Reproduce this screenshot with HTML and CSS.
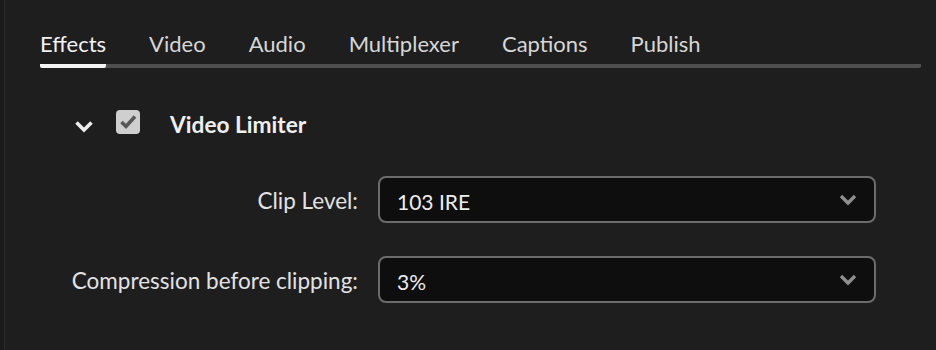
FILE: index.html
```html
<!DOCTYPE html>
<html lang="en">
<head>
    <meta charset="UTF-8">
    <title>Effects - Video Limiter</title>
    <link rel="stylesheet" href="styles.css">
</head>
<body>

<div class="panel">
    <div class="tabs">
        <div class="tab active">Effects</div>
        <div class="tab">Video</div>
        <div class="tab">Audio</div>
        <div class="tab">Multiplexer</div>
        <div class="tab">Captions</div>
        <div class="tab">Publish</div>
    </div>

    <div class="section-head">
        <svg class="twisty" width="20" height="13" viewBox="0 0 20 13">
            <polyline points="2.5,2.5 10,10 17.5,2.5" fill="none" stroke="#ececec" stroke-width="3.6" stroke-linejoin="miter"/>
        </svg>
        <div class="check">
            <svg width="24" height="24" viewBox="0 0 24 24">
                <polyline points="5.5,12 10,16.5 19,6.5" fill="none" stroke="#585858" stroke-width="3.6"/>
            </svg>
        </div>
        <div class="section-title">Video Limiter</div>
    </div>

    <div class="fields">
        <label class="field-label">Clip Level:</label>
        <div class="dropdown">
            <span>103 IRE</span>
            <svg width="20" height="13" viewBox="0 0 20 13">
                <polyline points="3,3 10,10 17,3" fill="none" stroke="#8e8e8e" stroke-width="3.4"/>
            </svg>
        </div>

        <label class="field-label">Compression before clipping:</label>
        <div class="dropdown">
            <span>3%</span>
            <svg width="20" height="13" viewBox="0 0 20 13">
                <polyline points="3,3 10,10 17,3" fill="none" stroke="#8e8e8e" stroke-width="3.4"/>
            </svg>
        </div>
    </div>
</div>

</body>
</html>
```

FILE: styles.css
```css
html, body {
    margin: 0;
    height: 100%;
}
body {
    background: #1a1a1a;
    font-family: Lato, "Open Sans", sans-serif;
    color: #e4e4e4;
    padding-left: 4px;
    box-sizing: border-box;
}
.panel {
    background: #1e1e1e;
    border-left: 1px solid #2b2b2b;
    height: 100%;
    padding: 32px 15px 0 35px;
    box-sizing: border-box;
}
.tabs {
    display: flex;
    gap: 43px;
    border-bottom: 4px solid #4f4f4f;
    border-radius: 2px;
}
.tab {
    font-size: 22px;
    line-height: 24px;
    padding-bottom: 8px;
    color: #d6d6d6;
}
.tab.active {
    color: #f2f2f2;
    border-bottom: 4px solid #f4f4f4;
    border-radius: 2px;
    margin-bottom: -4px;
}
.section-head {
    display: flex;
    align-items: center;
    height: 24px;
    margin-top: 42px;
    padding-left: 34px;
}
.twisty {
    margin-top: 8px;
}
.check {
    width: 24px;
    height: 24px;
    background: #cfcfcf;
    border-radius: 4px;
    margin-left: 22px;
}
.check svg {
    display: block;
}
.section-title {
    font-size: 22.7px;
    font-weight: bold;
    color: #efefef;
    margin-left: 30px;
    padding-top: 4px;
}
.fields {
    display: grid;
    grid-template-columns: 318px 498px;
    column-gap: 20px;
    row-gap: 33px;
    align-items: center;
    margin-top: 42px;
}
.field-label {
    text-align: right;
    font-size: 22.5px;
    color: #e2e2e2;
    padding-top: 2px;
}
.dropdown {
    display: flex;
    align-items: center;
    justify-content: space-between;
    height: 47px;
    box-sizing: border-box;
    border: 2px solid #6c6c6c;
    border-radius: 8px;
    background: #0e0e0e;
    padding: 0 16px 0 17px;
    font-size: 21px;
    color: #ededed;
}
.dropdown span {
    padding-top: 3px;
}
```
